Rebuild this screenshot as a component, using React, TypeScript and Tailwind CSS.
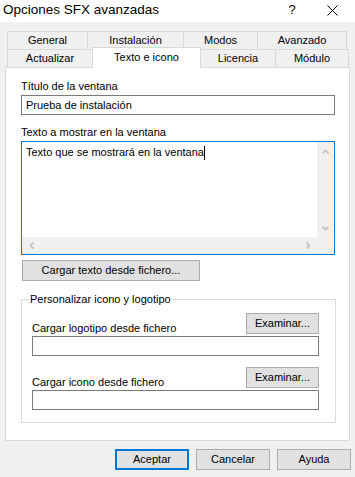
import React from "react";

const Chev = ({ dir }: { dir: "up" | "down" | "left" | "right" }) => {
  const pts: Record<string, string> = {
    up: "0.5,4.5 3.5,1.5 6.5,4.5",
    down: "0.5,1.5 3.5,4.5 6.5,1.5",
    left: "4.5,0.5 1.5,3.5 4.5,6.5",
    right: "1.5,0.5 4.5,3.5 1.5,6.5",
  };
  const w = dir === "up" || dir === "down" ? 7 : 6;
  const h = dir === "up" || dir === "down" ? 6 : 7;
  return (
    <svg width={w} height={h} viewBox={`0 0 ${w} ${h}`}>
      <polyline points={pts[dir]} fill="none" stroke="#bdbdbd" strokeWidth="1.6" />
    </svg>
  );
};

const Btn = ({ children, className = "" }: { children: React.ReactNode; className?: string }) => (
  <div
    className={`flex items-center justify-center bg-[#e1e1e1] border border-[#adadad] text-black ${className}`}
  >
    {children}
  </div>
);

export default function App() {
  const font = { fontFamily: '"Liberation Sans", Arial, sans-serif' };
  return (
    <div
      className="w-[355px] h-[477px] bg-[#f0f0f0] text-[11px] text-black overflow-hidden flex flex-col"
      style={font}
    >
      {/* Title bar */}
      <div className="h-[22px] bg-white flex items-center shrink-0">
        <div className="pl-[3px] text-[13.5px] leading-[18px] mt-[-2px]">Opciones SFX avanzadas</div>
        <div className="ml-auto flex items-center">
          <div className="w-[14px] text-center text-[13px] mt-[-2px] mr-[28px]">?</div>
          <svg width="11" height="11" viewBox="0 0 11 11" className="mr-[17px] mt-[-2px]">
            <line x1="0.5" y1="0.5" x2="10.5" y2="10.5" stroke="#000" strokeWidth="1" />
            <line x1="10.5" y1="0.5" x2="0.5" y2="10.5" stroke="#000" strokeWidth="1" />
          </svg>
        </div>
      </div>

      {/* Tabs */}
      <div className="mt-[9px] ml-[7px] flex h-[18px] shrink-0">
        <div className="w-[80px] border-l border-t border-[#d9d9d9] flex items-center justify-center">General</div>
        <div className="w-[96px] border-l border-t border-[#d9d9d9] flex items-center justify-center">Instalación</div>
        <div className="w-[74px] border-l border-t border-[#d9d9d9] flex items-center justify-center">Modos</div>
        <div className="w-[90px] border-l border-t border-r border-[#d9d9d9] flex items-center justify-center">Avanzado</div>
      </div>
      <div className="ml-[7px] flex h-[18px] items-start shrink-0">
        <div className="w-[85px] h-[18px] border-l border-t border-[#d9d9d9] flex items-center justify-center">Actualizar</div>
        <div className="relative z-10 w-[109px] h-[21px] mt-[-2px] bg-white border-l border-t border-r border-[#d9d9d9] flex items-center justify-center pb-[1px]">
          Texto e icono
        </div>
        <div className="w-[75px] h-[18px] border-t border-r border-[#d9d9d9] flex items-center justify-center">Licencia</div>
        <div className="w-[73px] h-[18px] border-t border-r border-[#d9d9d9] flex items-center justify-center">Módulo</div>
      </div>

      {/* Panel */}
      <div className="ml-[5px] w-[345px] h-[374px] shrink-0 bg-white border border-[#d9d9d9] flex flex-col pl-[15px] pt-[11px]">
        <div className="h-[15px] leading-[15px]">Título de la ventana</div>
        <div className="mt-[1px] w-[314px] h-[20px] border border-[#7a7a7a] flex items-center pl-[4px]">
          Prueba de instalación
        </div>
        <div className="mt-[10px] h-[15px] leading-[15px]">Texto a mostrar en la ventana</div>
        <div className="mt-[1px] w-[314px] h-[114px] border border-[#0078d7] bg-[#f0f0f0] grid grid-cols-[1fr_17px] grid-rows-[1fr_17px]">
          <div className="bg-white rounded-br-[2px] pl-[4px] pt-[3px] flex items-start">
            <span className="leading-[15px]">Texto que se mostrará en la ventana</span>
            <span className="inline-block w-px h-[14px] bg-black mt-[1px]"></span>
          </div>
          <div className="flex flex-col items-center justify-between pt-[7px] pb-[6px]">
            <Chev dir="up" />
            <Chev dir="down" />
          </div>
          <div className="flex items-center justify-between pl-[7px] pr-[6px]">
            <Chev dir="left" />
            <Chev dir="right" />
          </div>
          <div></div>
        </div>
        <Btn className="mt-[5px] ml-[1px] w-[178px] h-[21px]">Cargar texto desde fichero...</Btn>

        {/* Group box */}
        <div className="mt-[18px] w-[315px] h-[124px] border border-[#dcdcdc] flex flex-col pl-[10px]">
          <div className="mt-[-8px] ml-[-3px] self-start bg-white px-[1px] h-[15px] leading-[15px]">
            Personalizar icono y logotipo
          </div>
          <div className="mt-[6px] h-[23px] w-[287px] flex items-end justify-between">
            <div className="h-[15px] leading-[15px]">Cargar logotipo desde fichero</div>
            <Btn className="self-start w-[73px] h-[21px]">Examinar...</Btn>
          </div>
          <div className="w-[287px] h-[20px] border border-[#7a7a7a]"></div>
          <div className="mt-[11px] h-[23px] w-[287px] flex items-end justify-between">
            <div className="h-[15px] leading-[15px]">Cargar icono desde fichero</div>
            <Btn className="self-start w-[73px] h-[21px]">Examinar...</Btn>
          </div>
          <div className="w-[287px] h-[20px] border border-[#7a7a7a]"></div>
        </div>
      </div>

      {/* Bottom buttons */}
      <div className="mt-[8px] flex justify-end gap-[7px] pr-[4px]">
        <div className="w-[74px] h-[21px] flex items-center justify-center bg-[#e1e1e1] border-2 border-[#0078d7]">
          Aceptar
        </div>
        <Btn className="w-[74px] h-[21px]">Cancelar</Btn>
        <Btn className="w-[74px] h-[21px]">Ayuda</Btn>
      </div>
    </div>
  );
}
